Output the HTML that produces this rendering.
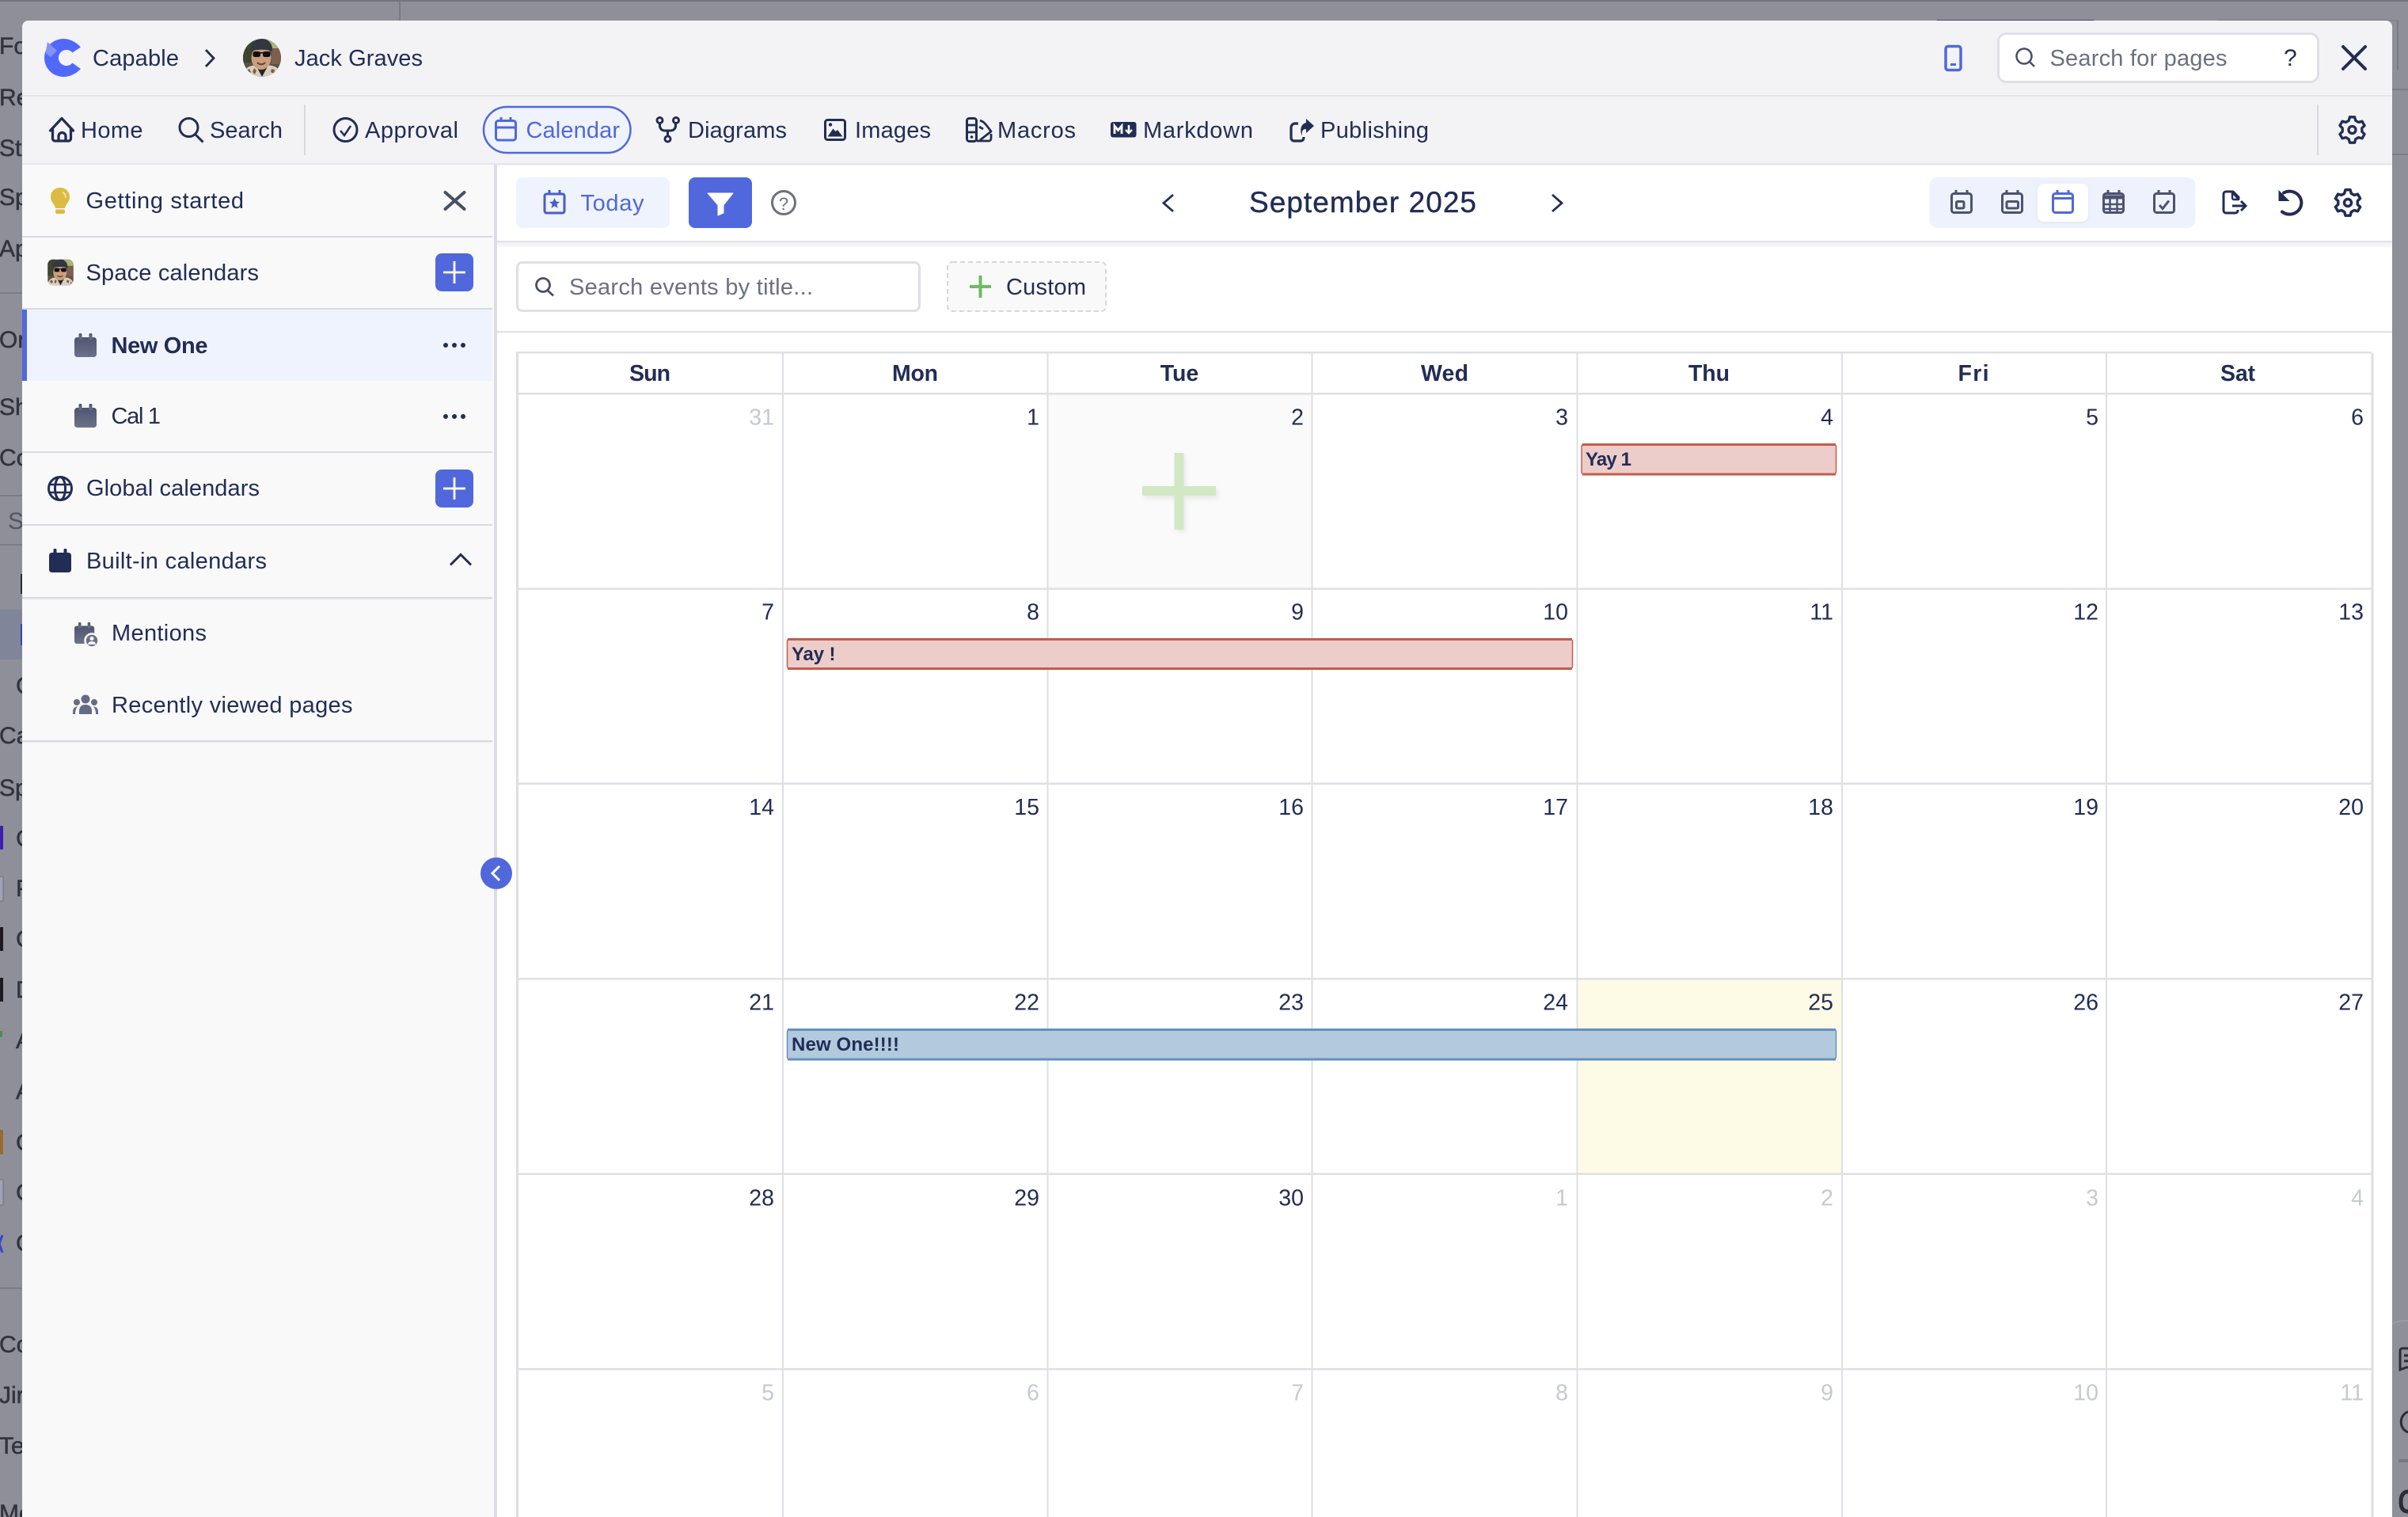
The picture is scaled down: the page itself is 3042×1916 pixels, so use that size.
<!DOCTYPE html>
<html lang="en">
<head>
<meta charset="utf-8">
<title>Calendar</title>
<style>
html,body{margin:0;padding:0;background:#8f8f99;}
body{width:3042px;height:1916px;overflow:hidden;}
svg{display:block;}
text{font-family:"Liberation Sans",sans-serif;}
.t{font-size:29px;fill:#222d55;}
.g{font-size:29px;fill:#6b7083;}
.bg{font-size:30px;fill:#33333e;stroke:#33333e;stroke-width:.5;}
.h{font-size:28.5px;fill:#222d55;font-weight:700;text-anchor:middle;}
.d{font-size:28.5px;fill:#222d55;text-anchor:end;}
.m{font-size:28.5px;fill:#c6c9d3;text-anchor:end;}
.e{font-size:24px;fill:#222d55;font-weight:700;}
</style>
</head>
<body>
<svg xmlns="http://www.w3.org/2000/svg" width="3042" height="1916" viewBox="0 0 3042 1916">
<defs>
<clipPath id="cAv"><circle cx="0" cy="0" r="24"/></clipPath>
<clipPath id="cAv2"><rect x="-24" y="-24" width="48" height="48" rx="10"/></clipPath>
<filter id="blur" x="-30%" y="-30%" width="160%" height="160%"><feGaussianBlur stdDeviation="3"/></filter>
<linearGradient id="calG" x1="0" y1="0" x2="0" y2="1"><stop offset="0" stop-color="#4f5472"/><stop offset="1" stop-color="#6d7289"/></linearGradient>
<g id="avatar">
<rect x="-24" y="-24" width="48" height="48" fill="#5b5140"/>
<rect x="-24" y="-24" width="14" height="30" fill="#3d4430"/>
<rect x="6" y="-24" width="18" height="12" fill="#a9b675"/>
<rect x="12" y="-12" width="12" height="20" fill="#7c5f50"/>
<path d="M-24 24c1-13 9-15 24-15s23 2 24 15z" fill="#d6d0c0"/>
<path d="M-20 16l4-2 2 4-3 3zM-10 13l3 3-2 5-3-3zM12 14l4 1-1 5-4-2zM18 17l3 2-2 3z" fill="#8c5a3c"/>
<path d="M-7 11l7 13 7-13z" fill="#25252a"/>
<ellipse cx="-1" cy="0" rx="12.500" ry="15" fill="#c99f7e"/>
<path d="M-14-8c-1-4 1-15 13-16 12 0 15 10 14 16-6-3-21-3-27 0z" fill="#33373f"/>
<rect x="-11.500" y="-8" width="9.500" height="7" rx="2.500" fill="#0f0f12"/>
<rect x="1" y="-8" width="9.500" height="7" rx="2.500" fill="#0f0f12"/>
<rect x="-3" y="-7" width="5" height="1.500" fill="#0f0f12"/>
<path d="M-6 6c3 3 7 3 10 0" stroke="#6a3f30" stroke-width="2" fill="none"/>
</g>
<g id="gear" fill="none" stroke-linejoin="round">
<path d="M-3.100-16.200 3.100-16.200 4.300-11.700 8-9.600 12.500-10.800 15.600-5.400 12.300-2.200 12.300 2.200 15.600 5.400 12.500 10.800 8 9.600 4.300 11.700 3.100 16.200-3.100 16.200-4.300 11.700-8 9.600-12.500 10.800-15.600 5.400-12.300 2.200-12.300-2.200-15.600-5.400-12.500-10.800-8-9.600-4.300-11.700z"/>
<circle r="4.500"/>
</g>
<g id="calfill">
<rect x="0" y="5" width="28" height="25" rx="3.500"/>
<rect x="5.500" y="0" width="4" height="8" rx="1.500"/>
<rect x="18.500" y="0" width="4" height="8" rx="1.500"/>
</g>
<g id="caltab" fill="none" stroke-width="3" stroke-linejoin="round">
<rect x="1.500" y="4.500" width="25" height="24" rx="3"/>
<path d="M7 0v4.500M21 0v4.500"/>
</g>
</defs>

<!-- page behind overlay -->
<rect width="3042" height="1916" fill="#8f8f99"/>
<rect width="3042" height="2" fill="#73737d"/>
<rect x="504" y="2" width="2" height="24" fill="#7a7a84"/>
<rect x="2447" y="25" width="198" height="1" fill="#2e3a8c" opacity=".8"/>
<rect x="2801" y="25" width="228" height="1" fill="#7c7c86"/>
<rect x="3028" y="26" width="2" height="62" fill="#7c7c86"/>
<rect x="3022" y="112" width="20" height="2" fill="#7c7c86"/>
<rect x="3022" y="194" width="20" height="2" fill="#7c7c86"/>
<rect x="0" y="369" width="28" height="2" fill="#7c7c86"/>
<rect x="0" y="625" width="28" height="2" fill="#7c7c86"/>
<rect x="0" y="687" width="28" height="2" fill="#7c7c86"/>
<rect x="0" y="770" width="28" height="63" fill="#81859a"/>
<rect x="0" y="1626" width="28" height="2" fill="#7c7c86"/>
<rect x="26" y="725" width="3" height="25" fill="#2c2c36"/>
<rect x="26" y="788" width="3" height="27" fill="#3348a8"/>
<g>
<text class="bg" x="-1" y="68">Fo</text>
<text class="bg" x="-1" y="133">Re</text>
<text class="bg" x="-1" y="197">Sta</text>
<text class="bg" x="-1" y="259">Sp</text>
<text class="bg" x="-1" y="324">Ap</text>
<text class="bg" x="-1" y="439">Or</text>
<text class="bg" x="-1" y="524">Sh</text>
<text class="bg" x="-1" y="588">Co</text>
<text class="bg" x="10" y="668" style="fill:#55555f;stroke:none">S</text>
<text class="bg" x="20" y="876">C</text>
<text class="bg" x="-1" y="939">Ca</text>
<text class="bg" x="-1" y="1005">Sp</text>
<text class="bg" x="20" y="1069">C</text>
<text class="bg" x="20" y="1132">P</text>
<text class="bg" x="20" y="1196">C</text>
<text class="bg" x="20" y="1260">D</text>
<text class="bg" x="20" y="1324">A</text>
<text class="bg" x="20" y="1388">A</text>
<text class="bg" x="20" y="1453">C</text>
<text class="bg" x="20" y="1516">C</text>
<text class="bg" x="20" y="1580">C</text>
<text class="bg" x="-1" y="1708">Co</text>
<text class="bg" x="-1" y="1772">Jir</text>
<text class="bg" x="-1" y="1836">Te</text>
<text class="bg" x="-1" y="1921">Me</text>
</g>
<rect x="0" y="1043" width="4" height="30" rx="1" fill="#3a1fb0"/>
<rect x="-1" y="1107" width="5" height="31" fill="#a0a3b4" stroke="#70707a"/>
<rect x="0" y="1171" width="4" height="30" fill="#1e1a22"/>
<rect x="0" y="1235" width="4" height="30" fill="#1e1a22"/>
<rect x="0" y="1302" width="3" height="8" fill="#4c8a55"/>
<rect x="0" y="1427" width="4" height="31" fill="#9a6a2c"/>
<rect x="-1" y="1490" width="5" height="32" fill="#a0a3b4" stroke="#70707a"/>
<path d="M3 1560-1 1571 3 1582" stroke="#3348c8" stroke-width="3" fill="none"/>
<path d="M3022 1672c4-3 12-4 20-4" stroke="#9c9ca5" stroke-width="2" fill="none"/>
<path d="M3042 1703h-7a3 3 0 0 0-3 3v24l8-3h2" stroke="#2c2c36" stroke-width="3" fill="none"/>
<path d="M3037 1712h5M3037 1719h5" stroke="#2c2c36" stroke-width="3"/>
<path d="M3042 1783a14 14 0 0 0 0 26" stroke="#2c2c36" stroke-width="3" fill="none"/>
<rect x="3030" y="1843" width="12" height="4" fill="#76767f"/>
<path d="M3042 1884c-6 0-9 5-9 13s3 12 9 12" stroke="#2c2c36" stroke-width="5" fill="none"/>

<!-- modal -->
<path d="M36 26H3014a8 8 0 0 1 8 8V1916H28V34a8 8 0 0 1 8-8z" fill="#ffffff"/>
<path d="M36 26H3014a8 8 0 0 1 8 8V120H28V34a8 8 0 0 1 8-8z" fill="#f3f3f6"/>
<rect x="28" y="120" width="2994" height="2" fill="#e3e3e8"/>
<rect x="28" y="122" width="2994" height="84" fill="#f3f3f6"/>
<rect x="28" y="206" width="2994" height="2.500" fill="#e5e5ea"/>

<!-- header row -->
<path d="M102 59.500Q92 49 80 49A24 24 0 0 0 80 97Q92 97 102 87L91.500 79.500A10 10 0 1 1 91.500 66.500Z" fill="#5068fb"/>
<path d="M57.500 67 60 53 72 64 64 72z" fill="#8592f5"/>
<text class="t" x="117" y="83" textLength="109" lengthAdjust="spacing">Capable</text>
<path d="M260 63l10 10.500-10 10.500" fill="none" stroke="#222d55" stroke-width="2.800"/>
<g transform="translate(331 73)" clip-path="url(#cAv)"><use href="#avatar"/></g>
<text class="t" x="372" y="83" textLength="162" lengthAdjust="spacing">Jack Graves</text>

<rect x="2458" y="58.500" width="19" height="30" rx="3" fill="none" stroke="#5068dc" stroke-width="3.500"/>
<rect x="2464" y="80" width="7" height="3" fill="#5068dc"/>
<rect x="2464" y="58" width="7" height="2" fill="#5068dc"/>
<rect x="2524.500" y="42.500" width="404" height="61" rx="10" fill="#fff" stroke="#dfdfe6" stroke-width="3"/>
<circle cx="2557" cy="71" r="9.500" fill="none" stroke="#4a4f68" stroke-width="2.500"/>
<path d="M2564 78l6 6" stroke="#4a4f68" stroke-width="2.500"/>
<text class="g" x="2589.500" y="83" textLength="224" lengthAdjust="spacing">Search for pages</text>
<text x="2885" y="83" style="font-size:30px;fill:#222d55">?</text>
<path d="M2960 59l28 28M2988 59l-28 28" stroke="#222d55" stroke-width="4" stroke-linecap="round"/>

<!-- nav row -->
<path d="M63.500 165 78 149.500 92.500 165M66.500 163v12a3 3 0 0 0 3 3h17a3 3 0 0 0 3-3v-12M74 178v-6a4.500 4.500 0 0 1 9 0v6" fill="none" stroke="#222d55" stroke-width="3.300" stroke-linejoin="round" stroke-linecap="round"/>
<text class="t" x="102" y="174" textLength="78.500" lengthAdjust="spacing">Home</text>
<circle cx="238.500" cy="161" r="11.500" fill="none" stroke="#222d55" stroke-width="3"/>
<path d="M247 170l9.500 9.500" stroke="#222d55" stroke-width="3"/>
<text class="t" x="265" y="174" textLength="92" lengthAdjust="spacing">Search</text>
<rect x="384" y="132" width="2" height="64" fill="#d8d8de"/>
<circle cx="436.500" cy="164" r="14.500" fill="none" stroke="#222d55" stroke-width="3"/>
<path d="M430 165l5 6 8-12" fill="none" stroke="#222d55" stroke-width="2.500"/>
<text class="t" x="461" y="174" textLength="118" lengthAdjust="spacing">Approval</text>

<rect x="611" y="135" width="185.500" height="58" rx="29" fill="#eff3fe" stroke="#5068dc" stroke-width="2.500"/>
<rect x="626.500" y="152.500" width="25" height="24.500" rx="3" fill="none" stroke="#5068dc" stroke-width="3"/>
<path d="M626.500 161h25M633 148v6M645 148v6" stroke="#5068dc" stroke-width="3"/>
<text x="664.500" y="174" style="font-size:29px;fill:#5068dc" textLength="118.500" lengthAdjust="spacing">Calendar</text>

<circle cx="833.500" cy="152" r="3.500" fill="none" stroke="#222d55" stroke-width="3"/>
<circle cx="854" cy="152" r="3.500" fill="none" stroke="#222d55" stroke-width="3"/>
<circle cx="843.500" cy="175.500" r="3.500" fill="none" stroke="#222d55" stroke-width="3"/>
<path d="M833.500 156v3a6 6 0 0 0 6 6h8a6 6 0 0 0 6-6v-3M843.500 165v7" fill="none" stroke="#222d55" stroke-width="3"/>
<text class="t" x="869" y="174" textLength="125" lengthAdjust="spacing">Diagrams</text>

<rect x="1042.500" y="151.500" width="25" height="25" rx="3" fill="none" stroke="#222d55" stroke-width="3"/>
<circle cx="1049" cy="157.500" r="2.200" fill="#222d55"/>
<path d="M1045.500 172.500l7-10 3 3.500 2.500-2 6.500 8.500z" fill="#222d55"/>
<text class="t" x="1080" y="174" textLength="96" lengthAdjust="spacing">Images</text>

<rect x="1221.500" y="149.500" width="12" height="29" rx="3" fill="none" stroke="#222d55" stroke-width="3"/>
<path d="M1221.500 158h12M1221.500 167h12" stroke="#222d55" stroke-width="2.800"/>
<circle cx="1227.500" cy="173" r="1.800" fill="#222d55"/>
<path d="M1238 152l4 2c3 2 7 8 10 12l-14 11M1234 178h15a3 3 0 0 0 3-3v-6M1237 160l5 3" fill="none" stroke="#222d55" stroke-width="2.800" stroke-linejoin="round"/>
<text class="t" x="1260" y="174" textLength="99" lengthAdjust="spacing">Macros</text>

<rect x="1403" y="154" width="32.500" height="19.500" rx="3" fill="#222d55"/>
<path d="M1408 169v-10l4.500 5.500 4.500-5.500v10" fill="none" stroke="#fff" stroke-width="2.800"/>
<path d="M1426 158v10m-4-4 4 4 4-4" fill="none" stroke="#fff" stroke-width="2.500"/>
<text class="t" x="1444" y="174" textLength="139" lengthAdjust="spacing">Markdown</text>

<path d="M1640 156h-4a5 5 0 0 0-5 5v13a4 4 0 0 0 4 4h8a4 4 0 0 0 4-4v-1" fill="none" stroke="#222d55" stroke-width="3.200"/>
<path d="M1650 150l10 9-10 9v-5c-4 0-6 2-5 9-4-8-1-16 5-17z" fill="#222d55"/>
<text class="t" x="1668" y="174" textLength="137" lengthAdjust="spacing">Publishing</text>

<rect x="2927" y="132" width="2" height="64" fill="#d8d8de"/>
<use href="#gear" x="2971.500" y="164" stroke="#222d55" stroke-width="3.300"/>

<!-- sidebar -->
<rect x="28" y="208" width="596" height="1708" fill="#f9f9fa"/>
<rect x="624" y="208" width="4" height="1708" fill="#dcdde4"/>
<path d="M76 237c-7 0-12 5-12 12 0 6 5 9 6 14h12c1-5 6-8 6-14 0-7-5-12-12-12z" fill="#dcbb44"/>
<rect x="70" y="264.500" width="12" height="5.500" rx="2" fill="#dcbb44"/>
<path d="M79 243c3 1 4 4 4 7" stroke="#f2e2a0" stroke-width="2" fill="none"/>
<text class="t" x="108.500" y="263" textLength="199.500" lengthAdjust="spacing">Getting started</text>
<path d="M562.500 243l24 21M586.500 243l-24 21" stroke="#4a4f68" stroke-width="4" stroke-linecap="round"/>
<rect x="28" y="298" width="594" height="2" fill="#d9d9e0"/>

<g transform="translate(76.500 344) scale(.68)" clip-path="url(#cAv2)"><use href="#avatar"/></g>
<text class="t" x="108.500" y="354" textLength="218.500" lengthAdjust="spacing">Space calendars</text>
<rect x="550" y="320" width="48" height="48" rx="8" fill="#5068dc"/>
<path d="M560 344h28M574 330v28" stroke="#fff" stroke-width="2.800"/>
<rect x="28" y="389" width="594" height="2.500" fill="#d9d9e0"/>

<rect x="28" y="391" width="594" height="90" fill="#eff3fe"/>
<rect x="28" y="391" width="6" height="90" fill="#5068dc"/>
<use href="#calfill" x="94" y="421" fill="url(#calG)"/>
<text class="t" x="140.500" y="446" style="font-weight:700" textLength="122" lengthAdjust="spacing">New One</text>
<g fill="#222d55"><circle cx="563" cy="436" r="3"/><circle cx="574" cy="436" r="3"/><circle cx="585" cy="436" r="3"/></g>

<use href="#calfill" x="94" y="510" fill="url(#calG)"/>
<text class="t" x="140.500" y="535" textLength="62.500" lengthAdjust="spacing">Cal 1</text>
<g fill="#222d55"><circle cx="563" cy="526" r="3"/><circle cx="574" cy="526" r="3"/><circle cx="585" cy="526" r="3"/></g>
<rect x="28" y="570" width="594" height="2" fill="#d9d9e0"/>

<circle cx="76" cy="617" r="14.500" fill="none" stroke="#222d55" stroke-width="3"/>
<ellipse cx="76" cy="617" rx="6.500" ry="14.500" fill="none" stroke="#222d55" stroke-width="3"/>
<path d="M61.500 612h29M61.500 622h29" stroke="#222d55" stroke-width="2.500"/>
<text class="t" x="109" y="626" textLength="219" lengthAdjust="spacing">Global calendars</text>
<rect x="550" y="593" width="48" height="48" rx="8" fill="#5068dc"/>
<path d="M560 617h28M574 603v28" stroke="#fff" stroke-width="2.800"/>
<rect x="28" y="662" width="594" height="2" fill="#d9d9e0"/>

<use href="#calfill" x="62" y="693" fill="#222d55"/>
<text class="t" x="109" y="718" textLength="228" lengthAdjust="spacing">Built-in calendars</text>
<path d="M569 713.500 582 700.500 595 713.500" fill="none" stroke="#222d55" stroke-width="3"/>
<rect x="28" y="754" width="594" height="2.500" fill="#d9d9e0"/>

<g transform="translate(94 786) scale(.9)"><use href="#calfill" fill="url(#calG)"/></g>
<circle cx="116" cy="809" r="8.500" fill="#6d7289" stroke="#f9f9fa" stroke-width="2.500"/>
<circle cx="116" cy="806.500" r="2.500" fill="#f9f9fa"/>
<path d="M111 814a5 4 0 0 1 10 0z" fill="#f9f9fa"/>
<text class="t" x="141" y="809" textLength="120" lengthAdjust="spacing">Mentions</text>

<g fill="#666b85">
<circle cx="108" cy="883" r="5.500"/><circle cx="97" cy="887" r="4"/><circle cx="119" cy="887" r="4"/>
<path d="M100 902v-4c0-5 3-8 8-8s8 3 8 8v4z"/>
<path d="M92 902v-3c0-4 2-6 6-7-2 3-3 6-3 10zM124 902v-3c0-4-2-6-6-7 2 3 3 6 3 10z"/>
</g>
<text class="t" x="141" y="900" textLength="304.500" lengthAdjust="spacing">Recently viewed pages</text>
<rect x="28" y="935" width="594" height="2.500" fill="#d9d9e0"/>

<!-- toolbar -->
<rect x="628" y="304" width="2394" height="2.500" fill="#e4e4e9"/>
<rect x="628" y="306.500" width="2394" height="5" fill="#f5f5f7"/>
<rect x="652" y="224" width="194" height="64" rx="8" fill="#eff3fd"/>
<rect x="688" y="245" width="25" height="24" rx="2.500" fill="none" stroke="#4a5ec8" stroke-width="3"/>
<path d="M694 240v6M707 240v6" stroke="#4a5ec8" stroke-width="3"/>
<path d="M700.500 250l2 4.500 4.500.500-3.500 3 1 4.700-4-2.400-4 2.400 1-4.700-3.500-3 4.500-.500z" fill="#4a5ec8"/>
<text x="733.500" y="266" style="font-size:29px;fill:#5068dc" textLength="80" lengthAdjust="spacing">Today</text>
<rect x="870" y="224" width="80" height="64" rx="8" fill="#5068dc"/>
<path d="M894 244h32l-12 15v10l-7 3v-13z" fill="#fff" stroke="#fff" stroke-width="1" stroke-linejoin="round"/>
<circle cx="990" cy="256" r="14.500" fill="none" stroke="#6b7083" stroke-width="3"/>
<text x="990" y="265" text-anchor="middle" style="font-size:22px;fill:#6b7083">?</text>

<path d="M1482 246l-12 10.500 12 10.500" fill="none" stroke="#222d55" stroke-width="2.800"/>
<text x="1578" y="268" style="font-size:37px;fill:#222d55" stroke="#222d55" stroke-width=".4" textLength="287" lengthAdjust="spacing">September 2025</text>
<path d="M1961 246l12 10.500-12 10.500" fill="none" stroke="#222d55" stroke-width="2.800"/>

<rect x="2437.500" y="224" width="336" height="64" rx="10" fill="#eef2fd"/>
<rect x="2574" y="233" width="64" height="48" rx="8" fill="#d8dce8" opacity=".6" filter="url(#blur)"/>
<rect x="2574" y="232" width="64" height="48" rx="8" fill="#fff"/>
<g stroke="#4d5270">
<use href="#caltab" x="2464" y="240"/>
<rect x="2471.500" y="254.500" width="9.500" height="8.500" rx="1.500" fill="none" stroke-width="3"/>
<use href="#caltab" x="2528" y="240"/>
<rect x="2535" y="254.500" width="14.500" height="8.500" rx="1.500" fill="none" stroke-width="3"/>
<use href="#caltab" x="2656" y="240"/>
<path d="M2657 247h26v4h-26z" fill="#4d5270" stroke-width="1"/>
<path d="M2657 258h26M2657 264h26M2665.500 251v17M2674.500 251v17" stroke-width="2.500" fill="none"/>
<use href="#caltab" x="2720" y="240"/>
<path d="M2728 259l4 4.500 8-10" fill="none" stroke-width="3"/>
</g>
<g stroke="#5068dc"><use href="#caltab" x="2592" y="240"/><path d="M2593 250.500h26" stroke-width="3"/></g>

<path d="M2828 252v-3l-7-7h-9a3 3 0 0 0-3 3v21a3 3 0 0 0 3 3h12a3 3 0 0 0 3-3v-1" fill="none" stroke="#222d55" stroke-width="3" stroke-linejoin="round"/>
<path d="M2820 243v7a2 2 0 0 0 2 2h6z" fill="none" stroke="#222d55" stroke-width="2.400" stroke-linejoin="round"/>
<path d="M2820 260h17M2831 254l6 6-6 6" fill="none" stroke="#222d55" stroke-width="3"/>
<path d="M2885 243.500a15 14.500 0 1 1-2 24" fill="none" stroke="#222d55" stroke-width="4" stroke-linecap="round"/>
<path d="M2878.500 240v14h14z" fill="#222d55"/>
<use href="#gear" x="2966" y="256" stroke="#222d55" stroke-width="3.500"/>

<!-- search row -->
<rect x="653.500" y="331.500" width="508" height="61" rx="6" fill="#fff" stroke="#dfdfe6" stroke-width="3"/>
<circle cx="686" cy="360" r="8.500" fill="none" stroke="#4a4f68" stroke-width="2.800"/>
<path d="M692 367l7 6.500" stroke="#4a4f68" stroke-width="2.800"/>
<text class="g" x="719" y="372" textLength="308" lengthAdjust="spacing">Search events by title...</text>
<rect x="1197" y="331" width="200" height="62" rx="6" fill="#f9f9fa" stroke="#d6d6dc" stroke-width="2" stroke-dasharray="6 4"/>
<path d="M1225 362h27M1238.500 348v28" stroke="#6bbd5f" stroke-width="4"/>
<text class="t" x="1271" y="372" textLength="101" lengthAdjust="spacing">Custom</text>
<rect x="628" y="418" width="2394" height="2.500" fill="#e4e4e9"/>

<!-- calendar -->
<rect x="1323" y="498" width="334" height="245" fill="#fafafa"/>
<rect x="1992" y="1237" width="334" height="245" fill="#fdfbe6"/>
<g fill="#dedfe3">
<rect x="652" y="444" width="3" height="1472"/>
<rect x="2995.500" y="446" width="3" height="1470"/>
<rect x="988" y="446" width="2" height="1470"/>
<rect x="1322.500" y="446" width="2" height="1470"/>
<rect x="1656.500" y="446" width="2" height="1470"/>
<rect x="1991.500" y="446" width="2" height="1470"/>
<rect x="2326" y="446" width="2" height="1470"/>
<rect x="2660" y="446" width="2" height="1470"/>
</g>
<g fill="#dfdfe6">
<rect x="652" y="444" width="2344" height="2.500"/>
<rect x="654" y="496" width="2342" height="2.500"/>
<rect x="654" y="742.500" width="2342" height="2.500"/>
<rect x="654" y="988.500" width="2342" height="2.500"/>
<rect x="654" y="1235" width="2342" height="2.500"/>
<rect x="654" y="1481.500" width="2342" height="2.500"/>
<rect x="654" y="1728" width="2342" height="2.500"/>
</g>
<text class="h" x="821" y="481" textLength="52" lengthAdjust="spacing">Sun</text>
<text class="h" x="1156" y="481" textLength="58" lengthAdjust="spacing">Mon</text>
<text class="h" x="1490" y="481" textLength="48.500" lengthAdjust="spacing">Tue</text>
<text class="h" x="1825" y="481" textLength="60" lengthAdjust="spacing">Wed</text>
<text class="h" x="2159" y="481" textLength="52" lengthAdjust="spacing">Thu</text>
<text class="h" x="2493" y="481" textLength="39" lengthAdjust="spacing">Fri</text>
<text class="h" x="2827" y="481" textLength="44" lengthAdjust="spacing">Sat</text>

<g transform="translate(-1 -.5)">
<text class="m" x="979" y="537">31</text><text class="d" x="1314" y="537">1</text><text class="d" x="1648" y="537">2</text><text class="d" x="1982" y="537">3</text><text class="d" x="2317" y="537">4</text><text class="d" x="2652" y="537">5</text><text class="d" x="2987" y="537">6</text>
<text class="d" x="979" y="783">7</text><text class="d" x="1314" y="783">8</text><text class="d" x="1648" y="783">9</text><text class="d" x="1982" y="783">10</text><text class="d" x="2317" y="783">11</text><text class="d" x="2652" y="783">12</text><text class="d" x="2987" y="783">13</text>
<text class="d" x="979" y="1029.500">14</text><text class="d" x="1314" y="1029.500">15</text><text class="d" x="1648" y="1029.500">16</text><text class="d" x="1982" y="1029.500">17</text><text class="d" x="2317" y="1029.500">18</text><text class="d" x="2652" y="1029.500">19</text><text class="d" x="2987" y="1029.500">20</text>
<text class="d" x="979" y="1276">21</text><text class="d" x="1314" y="1276">22</text><text class="d" x="1648" y="1276">23</text><text class="d" x="1982" y="1276">24</text><text class="d" x="2317" y="1276">25</text><text class="d" x="2652" y="1276">26</text><text class="d" x="2987" y="1276">27</text>
<text class="d" x="979" y="1523">28</text><text class="d" x="1314" y="1523">29</text><text class="d" x="1648" y="1523">30</text><text class="m" x="1982" y="1523">1</text><text class="m" x="2317" y="1523">2</text><text class="m" x="2652" y="1523">3</text><text class="m" x="2987" y="1523">4</text>
<text class="m" x="979" y="1769">5</text><text class="m" x="1314" y="1769">6</text><text class="m" x="1648" y="1769">7</text><text class="m" x="1982" y="1769">8</text><text class="m" x="2317" y="1769">9</text><text class="m" x="2652" y="1769">10</text><text class="m" x="2987" y="1769">11</text>
</g>

<!-- plus in hovered cell -->
<g fill="#e2e2e2" filter="url(#blur)" opacity=".7"><rect x="1446" y="618" width="93" height="12"/><rect x="1486" y="575" width="12" height="97"/></g>
<g fill="#d2e8c4"><rect x="1443" y="614" width="93" height="12"/><rect x="1483.500" y="572" width="12" height="97"/></g>

<!-- events -->
<rect x="1998" y="561" width="321.500" height="38" rx="3" fill="#edcdca" stroke="#c45c4c" stroke-width="1.500"/>
<rect x="1999" y="560" width="320" height="3" fill="#c45c4c"/><rect x="1999" y="597.500" width="320" height="3" fill="#c45c4c"/>
<text class="e" x="2003" y="588" textLength="58" lengthAdjust="spacing">Yay 1</text>
<rect x="994.500" y="807" width="992" height="37.500" rx="3" fill="#edcdca" stroke="#c45c4c" stroke-width="1.500"/>
<rect x="995" y="806" width="991" height="3" fill="#c45c4c"/><rect x="995" y="843" width="991" height="3" fill="#c45c4c"/>
<text class="e" x="1000" y="834" textLength="55.500" lengthAdjust="spacing">Yay !</text>
<rect x="994.500" y="1300" width="1325" height="38" rx="3" fill="#b2c9de" stroke="#6490bc" stroke-width="1.500"/>
<rect x="995" y="1299" width="1324" height="3" fill="#6490bc"/><rect x="995" y="1336.500" width="1324" height="3" fill="#6490bc"/>
<text class="e" x="1000" y="1327" textLength="136" lengthAdjust="spacing">New One!!!!</text>

<!-- collapse button -->
<ellipse cx="627" cy="1103" rx="20" ry="20" fill="#5068dc"/>
<path d="M631 1094l-9 9 9 9" fill="none" stroke="#fff" stroke-width="3"/>
</svg>
</body>
</html>
